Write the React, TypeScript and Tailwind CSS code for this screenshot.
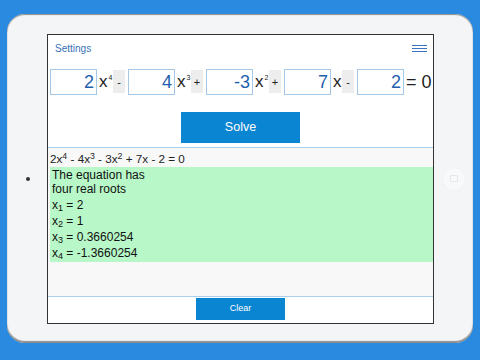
import React from 'react';

const font = { fontFamily: '"Liberation Sans", Arial, sans-serif' };

function Coef({ value }: { value: string }) {
    return (
        <div className="w-[47px] h-[26px] border border-[#a6c8e8] bg-white flex items-center justify-end pr-[2px] text-[18px] text-[#1f5fae] leading-none">
            {value}
        </div>
    );
}

function Power({ n }: { n?: string }) {
    return (
        <div className={`${n ? 'w-[16px]' : 'w-[11px]'} h-[26px] flex items-center pl-[2px] text-[17px] text-[#222] leading-none`}>
            x{n && <span className="text-[7px] self-start mt-[5px] ml-[1px]">{n}</span>}
        </div>
    );
}

function Sign({ s }: { s: string }) {
    return (
        <div className="w-[12px] h-[23px] bg-[#ededed] flex items-center justify-center pt-[2px] text-[11px] text-[#222] leading-none">
            {s}
        </div>
    );
}

export default function App() {
    return (
        <div className="w-[480px] h-[360px] bg-[#2a8ae0] pt-[14px] pl-[7px]" style={font}>
            {/* Tablet body */}
            <div className="w-[466px] h-[329px] bg-[#f4f5f7] rounded-[18px] shadow-[inset_0_1px_1px_#8d8d8d,inset_0_-2px_1px_#8d8d8d] flex items-center">
                {/* camera dot */}
                <div className="w-[40px] flex justify-center">
                    <div className="w-[4px] h-[4px] rounded-full bg-[#333] ml-[2px]" />
                </div>

                {/* Screen */}
                <div className="w-[387px] h-[290px] border border-[#333] bg-white flex flex-col">
                    {/* Header */}
                    <div className="h-[28px] flex items-center justify-between pl-[7px] pr-[6px]">
                        <span className="text-[10px] text-[#3a70b8]">Settings</span>
                        <div className="flex flex-col gap-[2px] w-[15px]">
                            <div className="h-px bg-[#3b75c0]" />
                            <div className="h-px bg-[#3b75c0]" />
                            <div className="h-px bg-[#3b75c0]" />
                        </div>
                    </div>

                    {/* Coefficients */}
                    <div className="mt-[6px] flex items-center pl-[2px] gap-[3px]">
                        <div className="flex items-center">
                            <Coef value="2" />
                            <Power n="4" />
                            <Sign s="-" />
                        </div>
                        <div className="flex items-center">
                            <Coef value="4" />
                            <Power n="3" />
                            <Sign s="+" />
                        </div>
                        <div className="flex items-center">
                            <Coef value="-3" />
                            <Power n="2" />
                            <Sign s="+" />
                        </div>
                        <div className="flex items-center">
                            <Coef value="7" />
                            <Power />
                            <Sign s="-" />
                        </div>
                        <div className="flex items-center">
                            <Coef value="2" />
                            <span className="ml-[2px] text-[18px] text-[#222] leading-none">= 0</span>
                        </div>
                    </div>

                    {/* Solve */}
                    <div className="mt-[17px] flex justify-center">
                        <button className="w-[119px] h-[31px] bg-[#0a85d1] text-white text-[12.5px]">Solve</button>
                    </div>

                    {/* Results */}
                    <div className="mt-[4px] border-t border-[#a9d1ef] bg-[#f8f8f9] flex-1 flex flex-col">
                        <div className="h-[19px] pl-[2px] pt-[4px] flex items-center text-[11.7px] text-[#222]">
                            <span>
                                2x<sup>4</sup> - 4x<sup>3</sup> - 3x<sup>2</sup> + 7x - 2 = 0
                            </span>
                        </div>
                        <div className="ml-[2px] bg-[#b8f8c8] pl-[2px] text-[12px] text-[#111]">
                            <div className="leading-[14.8px] pt-px">The equation has</div>
                            <div className="leading-[14.8px]">four real roots</div>
                            <div className="leading-[16px]">x<sub>1</sub> = 2</div>
                            <div className="leading-[16px]">x<sub>2</sub> = 1</div>
                            <div className="leading-[16px]">x<sub>3</sub> = 0.3660254</div>
                            <div className="leading-[16px] pb-px">x<sub>4</sub> = -1.3660254</div>
                        </div>
                    </div>

                    {/* Footer */}
                    <div className="h-[27px] border-t border-[#a9d1ef] bg-white flex justify-center pt-[1px]">
                        <button className="w-[89px] h-[22px] bg-[#0a85d1] text-white text-[9px]">Clear</button>
                    </div>
                </div>

                {/* Home button */}
                <div className="flex-1 flex justify-center">
                    <div className="w-[22px] h-[22px] rounded-full bg-[#f8f9fa] shadow-[0_0_1px_#e2e4e8] flex items-center justify-center">
                        <div className="w-[8px] h-[7px] border border-[#e4e6ea] rounded-[1px]" />
                    </div>
                </div>
            </div>
        </div>
    );
}
